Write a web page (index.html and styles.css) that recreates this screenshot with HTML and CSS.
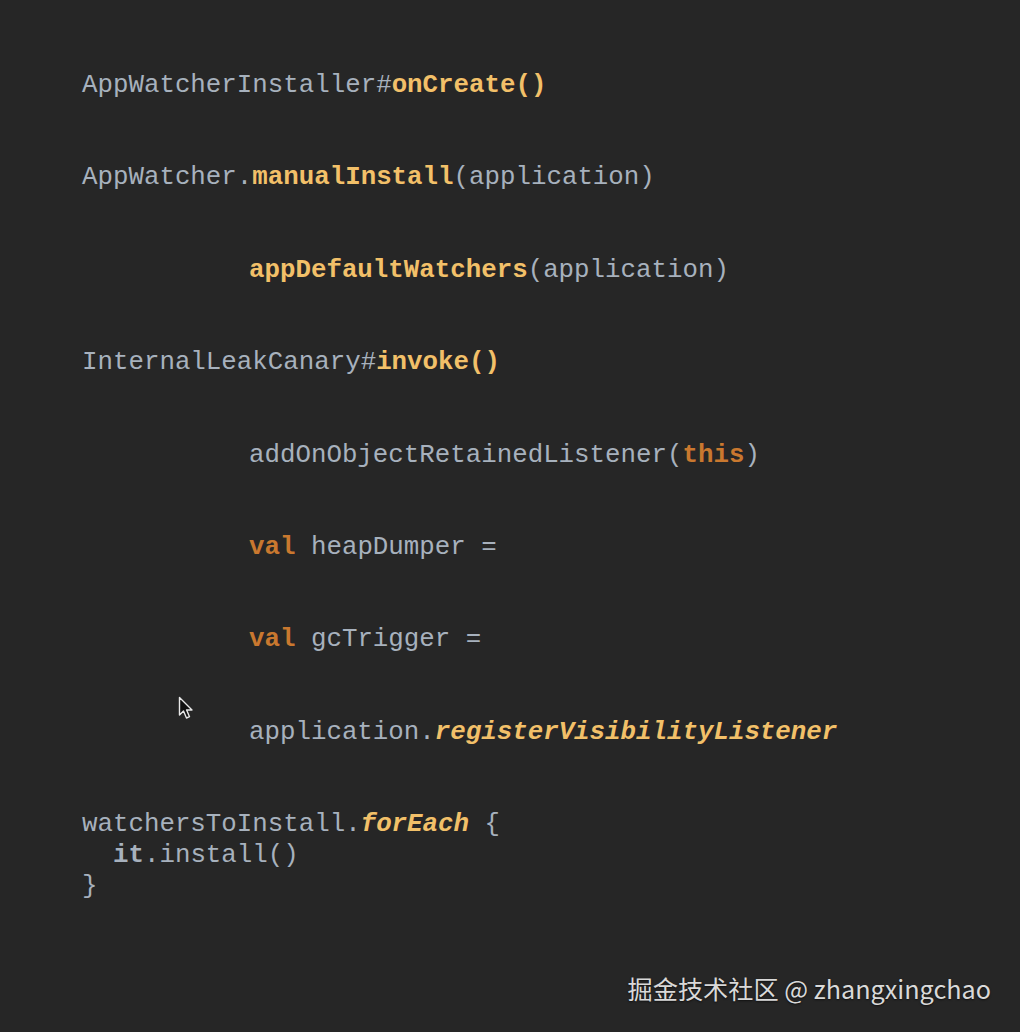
FILE: index.html
```html
<!DOCTYPE html>
<html>
<head>
<meta charset="utf-8">
<link rel="stylesheet" href="styles.css">
</head>
<body>
<main class="slide">
<pre class="code"><span class="fn">AppWatcherInstaller#<span class="b">onCreate()</span></span>


AppWatcher.<span class="b y">manualInstall</span>(application)


<span class="ind"></span><span class="b y">appDefaultWatchers</span>(application)


InternalLeakCanary#<span class="b y">invoke()</span>


<span class="ind"></span>addOnObjectRetainedListener(<span class="b kw">this</span>)


<span class="ind"></span><span class="b kw">val</span> heapDumper =


<span class="ind"></span><span class="b kw">val</span> gcTrigger =


<span class="ind"></span>application.<span class="b i y">registerVisibilityListener</span>


watchersToInstall.<span class="b i y">forEach</span> {
  <span class="b">it</span>.install()
}</pre>
<svg class="cursor" width="18" height="26" viewBox="0 0 18 26"><path d="M1.5 1.5 L1.5 19 L5.5 15 L8.5 22 L11.5 20.7 L8.6 14 L14 14 Z" fill="#111" stroke="#e8e8e8" stroke-width="1.4" stroke-linejoin="round"/></svg>
<div class="mark">掘金技术社区 @ zhangxingchao</div>
</main>
</body>
</html>
```
FILE: styles.css
```css
html, body {
  margin: 0;
  padding: 0;
  background: #262626;
}
.slide {
  position: relative;
  width: 1020px;
  height: 1032px;
  overflow: hidden;
}
.code {
  margin: 0;
  padding: 71px 0 0 82px;
  font-family: "Courier New", "Liberation Mono", monospace;
  font-size: 25.8px;
  line-height: 30.8px;
  color: #a7b1bd;
  font-weight: normal;
}
.b { font-weight: bold; }
.i { font-style: italic; }
.y { color: #f2c069; }
.fn .b { color: #f2c069; }
.kw { color: #c9782f; }
.ind {
  display: inline-block;
  width: 167px;
}
.cursor {
  position: absolute;
  left: 178px;
  top: 696px;
}
.mark {
  position: absolute;
  right: 29px;
  top: 970px;
  font-family: "Noto Sans CJK SC", "Noto Sans", sans-serif;
  font-size: 25.2px;
  line-height: 36px;
  color: #d9d9d9;
  text-shadow: 0 1px 2px rgba(0,0,0,0.6);
}
```
